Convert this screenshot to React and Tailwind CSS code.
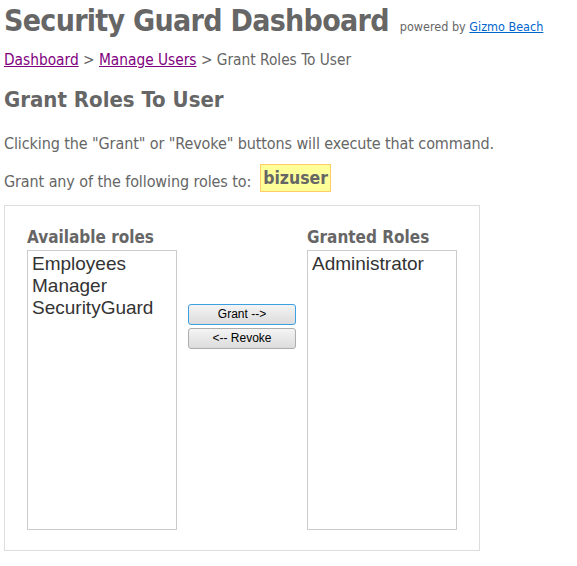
export default function App() {
  const tahoma = { fontFamily: "'DejaVu Sans Condensed', 'DejaVu Sans', sans-serif" };
  const arial = { fontFamily: "'Liberation Sans', Arial, sans-serif" };
  return (
    <div className="w-[577px] h-[566px] bg-white text-[#666666] pl-[4px] font-stretch-condensed" style={tahoma}>
      <div className="flex items-baseline h-[40px] pt-[1px]">
        <h1 className="text-[30px] font-bold leading-[40px] tracking-[-0.7px]">Security Guard Dashboard</h1>
        <span className="text-[12.5px] ml-[11px]">
          powered by <a href="#" className="text-[#0066cc] underline">Gizmo Beach</a>
        </span>
      </div>
      <div className="text-[15.3px] leading-[20px] mt-[10px]">
        <a href="#" className="text-[#800080] underline">Dashboard</a> &gt;{" "}
        <a href="#" className="text-[#800080] underline">Manage Users</a> &gt; Grant Roles To User
      </div>
      <h2 className="text-[22px] font-bold leading-[28px] mt-[16px]">Grant Roles To User</h2>
      <p className="text-[16px] leading-[20px] mt-[20px] tracking-[-0.1px]">
        Clicking the "Grant" or "Revoke" buttons will execute that command.
      </p>
      <div className="flex items-end mt-[10px] text-[16px] leading-[20px] tracking-[-0.1px]">
        <span>Grant any of the following roles to:</span>
        <span className="ml-[9px] bg-[#ffff99] border border-[#ffcc66] text-[17.5px] font-bold leading-[26px] px-[2px] tracking-normal">bizuser</span>
      </div>
      <div className="mt-[13px] w-[476px] h-[346px] border border-[#dddddd] pl-[22px] pt-[21px]">
        <div className="flex">
          <div className="w-[150px]">
            <div className="text-[17px] font-bold leading-[21px]">Available roles</div>
            <div className="mt-[2px] h-[280px] border border-[#cccccc] pl-[4px] pt-[2px] text-[19px] leading-[22px] text-[#333333]" style={arial}>
              <div>Employees</div>
              <div>Manager</div>
              <div>SecurityGuard</div>
            </div>
          </div>
          <div className="w-[108px] ml-[11px] mt-[77px] flex flex-col gap-[3px]" style={arial}>
            <button className="h-[21px] w-[108px] rounded-[3px] border border-[#3c9fe0] bg-gradient-to-b from-[#f4f4f4] to-[#dcdcdc] text-[12px] text-black leading-[19px]">Grant --&gt;</button>
            <button className="h-[21px] w-[108px] rounded-[3px] border border-[#adadad] bg-gradient-to-b from-[#f4f4f4] to-[#dcdcdc] text-[12px] text-black leading-[19px]">&lt;-- Revoke</button>
          </div>
          <div className="w-[150px] ml-[11px]">
            <div className="text-[17px] font-bold leading-[21px]">Granted Roles</div>
            <div className="mt-[2px] h-[280px] border border-[#cccccc] pl-[4px] pt-[2px] text-[19px] leading-[22px] text-[#333333]" style={arial}>
              <div>Administrator</div>
            </div>
          </div>
        </div>
      </div>
    </div>
  );
}
